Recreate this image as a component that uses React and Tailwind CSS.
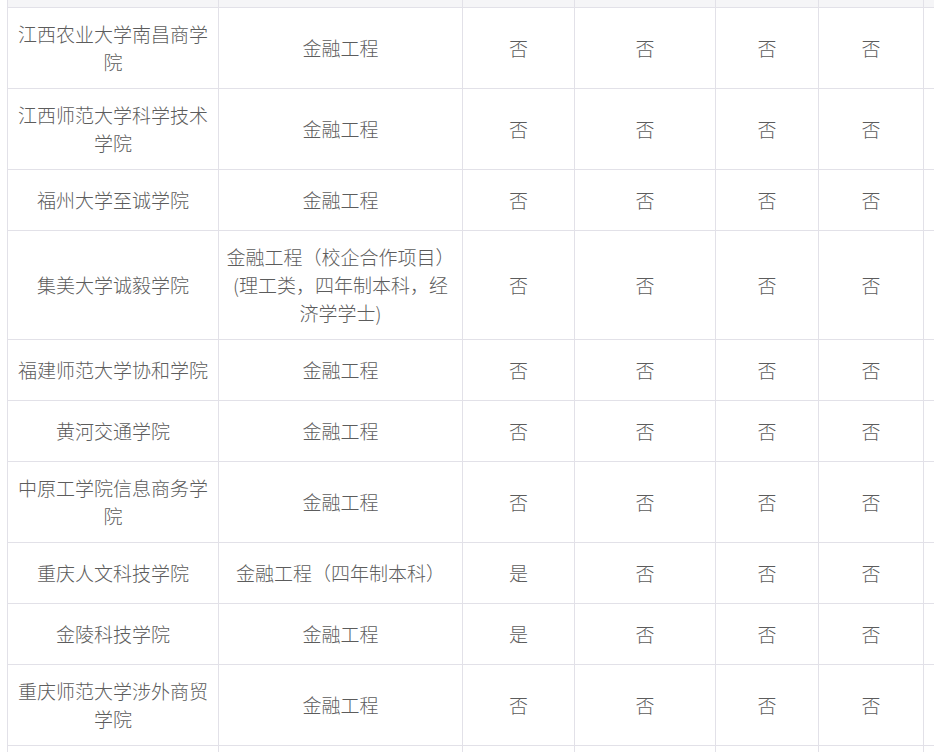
const rows = [
  { school: '江西农业大学南昌商学院', major: '金融工程', flags: ['否', '否', '否', '否'], h: 'h-[81px]' },
  { school: '江西师范大学科学技术学院', major: '金融工程', flags: ['否', '否', '否', '否'], h: 'h-[81px]' },
  { school: '福州大学至诚学院', major: '金融工程', flags: ['否', '否', '否', '否'], h: 'h-[61px]' },
  { school: '集美大学诚毅学院', major: '金融工程（校企合作项目）(理工类，四年制本科，经济学学士)', flags: ['否', '否', '否', '否'], h: 'h-[109px]' },
  { school: '福建师范大学协和学院', major: '金融工程', flags: ['否', '否', '否', '否'], h: 'h-[61px]' },
  { school: '黄河交通学院', major: '金融工程', flags: ['否', '否', '否', '否'], h: 'h-[61px]' },
  { school: '中原工学院信息商务学院', major: '金融工程', flags: ['否', '否', '否', '否'], h: 'h-[81px]' },
  { school: '重庆人文科技学院', major: '金融工程（四年制本科）', flags: ['是', '否', '否', '否'], h: 'h-[61px]' },
  { school: '金陵科技学院', major: '金融工程', flags: ['是', '否', '否', '否'], h: 'h-[61px]' },
  { school: '重庆师范大学涉外商贸学院', major: '金融工程', flags: ['否', '否', '否', '否'], h: 'h-[81px]' },
];

const cell = 'border border-[#e2e1e8] px-[7px] py-3 text-center align-middle';

export default function App() {
  return (
    <div
      className="w-[934px] h-[752px] overflow-hidden bg-white pl-[7px] text-[19px] leading-[28px] font-light text-[#5c5c5c]"
      style={{ fontFamily: '"Noto Sans CJK SC", "Noto Sans", sans-serif' }}
    >
      <table className="border-collapse table-fixed w-[1030px]">
        <colgroup>
          <col className="w-[211px]" />
          <col className="w-[244px]" />
          <col className="w-[112px]" />
          <col className="w-[141px]" />
          <col className="w-[103px]" />
          <col className="w-[105px]" />
          <col className="w-[114px]" />
        </colgroup>
        <tbody>
          <tr className="h-[7px] bg-[#f5f5f7]">
            {Array.from({ length: 7 }).map((_, i) => (
              <td key={i} className="border border-t-0 border-[#e2e1e8] p-0" />
            ))}
          </tr>
          {rows.map((r) => (
            <tr key={r.school} className={r.h}>
              <td className={cell}>{r.school}</td>
              <td className={cell}>{r.major}</td>
              {r.flags.map((f, i) => (
                <td key={i} className={cell}>{f}</td>
              ))}
              <td className={cell} />
            </tr>
          ))}
          <tr className="h-[61px]">
            {Array.from({ length: 7 }).map((_, i) => (
              <td key={i} className={cell} />
            ))}
          </tr>
        </tbody>
      </table>
    </div>
  );
}
